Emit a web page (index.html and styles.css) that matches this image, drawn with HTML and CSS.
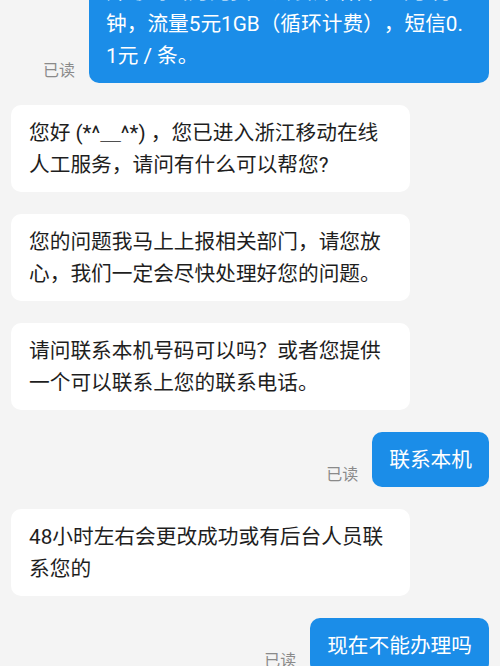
FILE: index.html
```html
<!DOCTYPE html>
<html lang="zh">
<head>
<meta charset="utf-8">
<link rel="stylesheet" href="styles.css">
</head>
<body>
<div class="chat">
  <div class="row out">
    <span class="read">已读</span>
    <div class="bubble blue wide">开号的当月免费。套餐外语音0.1元/分<br>钟，流量5元1GB（循环计费），短信0.<br>1元 / 条。</div>
  </div>
  <div class="row in">
    <div class="bubble white">您好 (*^＿^*) ，您已进入浙江移动在线<br>人工服务，请问有什么可以帮您?</div>
  </div>
  <div class="row in">
    <div class="bubble white">您的问题我马上上报相关部门，请您放<br>心，我们一定会尽快处理好您的问题。</div>
  </div>
  <div class="row in">
    <div class="bubble white">请问联系本机号码可以吗？或者您提供<br>一个可以联系上您的联系电话。</div>
  </div>
  <div class="row out">
    <span class="read">已读</span>
    <div class="bubble blue">联系本机</div>
  </div>
  <div class="row in">
    <div class="bubble white">48小时左右会更改成功或有后台人员联<br>系您的</div>
  </div>
  <div class="row out">
    <span class="read">已读</span>
    <div class="bubble blue">现在不能办理吗</div>
  </div>
</div>
</body>
</html>
```
FILE: styles.css
```css
html, body {
  margin: 0;
  padding: 0;
  background: #f4f4f4;
  overflow: hidden;
}
body {
  width: 500px;
  height: 666px;
  font-family: Roboto, "Noto Sans CJK SC", sans-serif;
  text-spacing-trim: space-all;
}
.chat {
  display: flex;
  flex-direction: column;
  gap: 22px;
  padding: 0 11px;
  margin-top: -36px;
}
.row {
  display: flex;
  align-items: flex-end;
  gap: 14px;
}
.row.out {
  justify-content: flex-end;
}
.row.in {
  justify-content: flex-start;
}
.read {
  font-size: 16px;
  line-height: 20px;
  color: #8a8a8a;
  margin-bottom: 2px;
}
.bubble {
  box-sizing: border-box;
  padding: 12px 18px 11px;
  font-size: 20.7px;
  line-height: 32px;
  border-radius: 10px;
  white-space: nowrap;
  text-spacing-trim: space-all;
}
.bubble.white {
  background: #ffffff;
  color: #1e1e1e;
  width: 399px;
}
.bubble.blue {
  background: #1b8de8;
  color: #ffffff;
  padding-left: 17px;
  padding-right: 17px;
}
.bubble.wide {
  width: 400px;
}
```
